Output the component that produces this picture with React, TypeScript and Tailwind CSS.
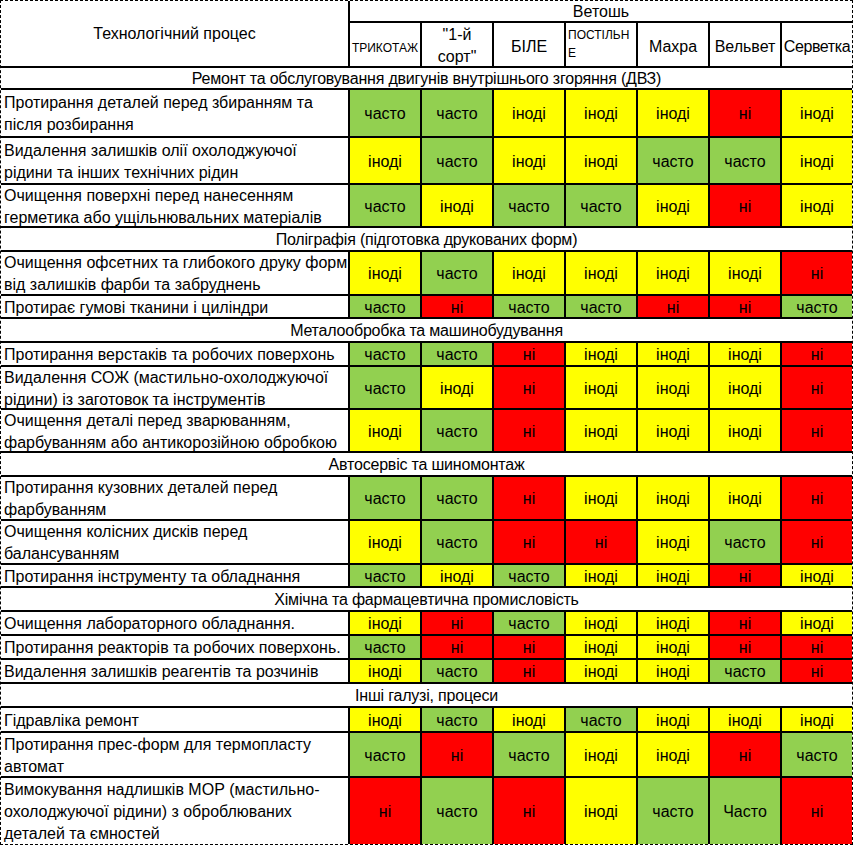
import React from "react";

type Row = { lines: string[]; values: string[]; h: string };
type Section = { title: string; h: string; rows: Row[] };

const CELL_BG: Record<string, string> = {
  часто: "bg-[#92d050]",
  Часто: "bg-[#92d050]",
  іноді: "bg-[#ffff00]",
  ні: "bg-[#ff0000]",
};

const SECTIONS: Section[] = [
  {
    title: "Ремонт та обслуговування двигунів внутрішнього згоряння (ДВЗ)",
    h: "h-[22px]",
    rows: [
      {
        lines: ["Протирання деталей перед збиранням та", "після розбирання"],
        values: ["часто", "часто", "іноді", "іноді", "іноді", "ні", "іноді"],
        h: "h-[48px]",
      },
      {
        lines: ["Видалення залишків олії охолоджуючої", "рідини та інших технічних рідин"],
        values: ["іноді", "часто", "іноді", "іноді", "часто", "часто", "іноді"],
        h: "h-[47px]",
      },
      {
        lines: ["Очищення поверхні перед нанесенням", "герметика або ущільнювальних матеріалів"],
        values: ["часто", "іноді", "часто", "часто", "іноді", "ні", "іноді"],
        h: "h-[43px]",
      },
    ],
  },
  {
    title: "Поліграфія (підготовка друкованих форм)",
    h: "h-[24px]",
    rows: [
      {
        lines: ["Очищення офсетних та глибокого друку форм", "від залишків фарби та забруднень"],
        values: ["іноді", "часто", "іноді", "іноді", "іноді", "іноді", "ні"],
        h: "h-[44px]",
      },
      {
        lines: ["Протирає гумові тканини і циліндри"],
        values: ["часто", "ні", "часто", "часто", "ні", "ні", "часто"],
        h: "h-[23px]",
      },
    ],
  },
  {
    title: "Металообробка та машинобудування",
    h: "h-[24px]",
    rows: [
      {
        lines: ["Протирання верстаків та робочих поверхонь"],
        values: ["часто", "часто", "ні", "іноді", "іноді", "іноді", "ні"],
        h: "h-[24px]",
      },
      {
        lines: ["Видалення СОЖ (мастильно-охолоджуючої", "рідини) із заготовок та інструментів"],
        values: ["часто", "іноді", "ні", "іноді", "іноді", "іноді", "ні"],
        h: "h-[43px]",
      },
      {
        lines: ["Очищення деталі перед зварюванням,", "фарбуванням або антикорозійною обробкою"],
        values: ["іноді", "часто", "ні", "іноді", "іноді", "іноді", "ні"],
        h: "h-[43px]",
      },
    ],
  },
  {
    title: "Автосервіс та шиномонтаж",
    h: "h-[24px]",
    rows: [
      {
        lines: ["Протирання кузовних деталей перед", "фарбуванням"],
        values: ["часто", "часто", "ні", "іноді", "іноді", "іноді", "ні"],
        h: "h-[44px]",
      },
      {
        lines: ["Очищення колісних дисків перед", "балансуванням"],
        values: ["іноді", "часто", "ні", "ні", "іноді", "часто", "ні"],
        h: "h-[44px]",
      },
      {
        lines: ["Протирання інструменту та обладнання"],
        values: ["часто", "іноді", "часто", "іноді", "іноді", "ні", "іноді"],
        h: "h-[23px]",
      },
    ],
  },
  {
    title: "Хімічна та фармацевтична промисловість",
    h: "h-[24px]",
    rows: [
      {
        lines: ["Очищення лабораторного обладнання."],
        values: ["іноді", "ні", "часто", "іноді", "іноді", "ні", "іноді"],
        h: "h-[24px]",
      },
      {
        lines: ["Протирання реакторів та робочих поверхонь."],
        values: ["часто", "ні", "ні", "іноді", "іноді", "ні", "ні"],
        h: "h-[24px]",
      },
      {
        lines: ["Видалення залишків реагентів та розчинів"],
        values: ["іноді", "часто", "ні", "іноді", "іноді", "часто", "ні"],
        h: "h-[24px]",
      },
    ],
  },
  {
    title: "Інші галузі, процеси",
    h: "h-[24px]",
    rows: [
      {
        lines: ["Гідравліка ремонт"],
        values: ["іноді", "часто", "іноді", "часто", "іноді", "іноді", "іноді"],
        h: "h-[25px]",
      },
      {
        lines: ["Протирання прес-форм для термопласту", "автомат"],
        values: ["часто", "ні", "часто", "іноді", "іноді", "ні", "часто"],
        h: "h-[45px]",
      },
      {
        lines: ["Вимокування надлишків МОР (мастильно-", "охолоджуючої рідини) з оброблюваних", "деталей та ємностей"],
        values: ["ні", "часто", "ні", "іноді", "часто", "Часто", "ні"],
        h: "h-[66px]",
      },
    ],
  },
];

const COLUMNS = ["ТРИКОТАЖ", '"1-й сорт"', "БІЛЕ", "ПОСТІЛЬНЕ", "Махра", "Вельвет", "Серветка"];

function HeaderCell({ name, last }: { name: string; last: boolean }) {
  const base = `${last ? "w-[70px]" : "w-[72px] border-r-2"} border-black flex shrink-0`;
  if (name === "ТРИКОТАЖ") {
    return <div className={`${base} items-center justify-center text-[12px] pt-[4px]`}>{name}</div>;
  }
  if (name === "ПОСТІЛЬНЕ") {
    return (
      <div className={`${base} flex-col items-start pl-[2px] pt-[3px] text-[12px] leading-[18px]`}>
        <span>ПОСТІЛЬН</span>
        <span>Е</span>
      </div>
    );
  }
  if (name === '"1-й сорт"') {
    return (
      <div className={`${base} flex-col items-center justify-center leading-[22px] pt-[1px]`}>
        <span>"1-й</span>
        <span>сорт"</span>
      </div>
    );
  }
  return (
    <div className={`${base} items-center justify-center whitespace-nowrap pt-[2px] ${last ? "tracking-[-0.4px]" : ""}`}>
      {name}
    </div>
  );
}

export default function App() {
  const lastSection = SECTIONS.length - 1;

  return (
    <div className="bg-white w-[853px] h-[846px] font-['Liberation_Sans',Arial,sans-serif] text-black text-[16px]">
      <div className="w-[853px] border border-dashed border-black">
        {/* header */}
        <div className="flex h-[67px] border-b-2 border-black">
          <div className="w-[349px] shrink-0 border-r-2 border-black flex items-center justify-center">
            Технологічний процес
          </div>
          <div className="flex flex-col flex-1">
            <div className="h-[22px] border-b-2 border-black flex items-center justify-center pt-[1px]">Ветошь</div>
            <div className="flex flex-1">
              {COLUMNS.map((c, i) => (
                <HeaderCell key={c} name={c} last={i === COLUMNS.length - 1} />
              ))}
            </div>
          </div>
        </div>

        {SECTIONS.map((section, si) => (
          <React.Fragment key={section.title}>
            <div
              className={`${section.h} border-b-2 border-black flex items-center justify-center pt-[2px] tracking-[-0.2px]`}
            >
              {section.title}
            </div>
            {section.rows.map((row, ri) => {
              const isLast = si === lastSection && ri === section.rows.length - 1;
              return (
                <div key={row.lines.join(" ")} className={`${row.h} flex ${isLast ? "" : "border-b-2"} border-black`}>
                  <div className="w-[349px] shrink-0 border-r-2 border-black flex flex-col justify-center pl-[3px] pt-[2px] leading-[22px] whitespace-nowrap">
                    {row.lines.map((line, li) => (
                      <span key={li}>{line}</span>
                    ))}
                  </div>
                  {row.values.map((v, vi) => (
                    <div
                      key={vi}
                      className={`${vi < 6 ? "w-[72px] border-r-2" : "w-[70px]"} shrink-0 border-black flex items-center justify-center pt-[2px] ${CELL_BG[v]}`}
                    >
                      {v}
                    </div>
                  ))}
                </div>
              );
            })}
          </React.Fragment>
        ))}
      </div>
    </div>
  );
}
